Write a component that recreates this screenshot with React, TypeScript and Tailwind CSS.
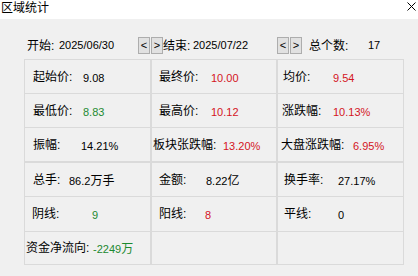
import React from 'react';

type Cell = {
  label?: string;
  value?: string;
  unit?: string;
  color?: string;
  pad?: string;
  lw?: string;
};

const RED = 'text-[#d4141e]';
const GREEN = 'text-[#1c8a30]';

const block1: Cell[][] = [
  [
    { label: '起始价:', value: '9.08', pad: 'pl-[8px]', lw: 'w-[50px]' },
    { label: '最终价:', value: '10.00', color: RED, pad: 'pl-[7px]', lw: 'w-[52px]' },
    { label: '均价:', value: '9.54', color: RED, pad: 'pl-[5px]', lw: 'w-[50px]' },
  ],
  [
    { label: '最低价:', value: '8.83', color: GREEN, pad: 'pl-[8px]', lw: 'w-[50px]' },
    { label: '最高价:', value: '10.12', color: RED, pad: 'pl-[7px]', lw: 'w-[52px]' },
    { label: '涨跌幅:', value: '10.13%', color: RED, pad: 'pl-[4px]', lw: 'w-[51px]' },
  ],
  [
    { label: '振幅:', value: '14.21%', pad: 'pl-[8px]', lw: 'w-[48px]' },
    { label: '板块张跌幅:', value: '13.20%', color: RED, pad: 'pl-[1px]', lw: 'w-[70px]' },
    { label: '大盘涨跌幅:', value: '6.95%', color: RED, pad: 'pl-[3px]', lw: 'w-[72px]' },
  ],
];

const block2: Cell[][] = [
  [
    { label: '总手:', value: '86.2', unit: '万手', pad: 'pl-[8px]', lw: 'w-[36px]' },
    { label: '金额:', value: '8.22', unit: '亿', pad: 'pl-[7px]', lw: 'w-[47px]' },
    { label: '换手率:', value: '27.17%', pad: 'pl-[6px]', lw: 'w-[54px]' },
  ],
  [
    { label: '阴线:', value: '9', color: GREEN, pad: 'pl-[7px]', lw: 'w-[60px]' },
    { label: '阳线:', value: '8', color: RED, pad: 'pl-[7px]', lw: 'w-[46px]' },
    { label: '平线:', value: '0', pad: 'pl-[6px]', lw: 'w-[54px]' },
  ],
  [
    { label: '资金净流向:', value: '-2249', unit: '万', color: GREEN, pad: 'pl-[1px]', lw: 'w-[67px]' },
    {},
    {},
  ],
];

const StatCell: React.FC<{ cell: Cell; last: boolean }> = ({ cell, last }) => (
  <div
    className={`flex items-center ${cell.pad ?? ''} ${
      last ? '' : 'border-r-2 border-[#dadada]'
    }`}
  >
    {cell.label && (
      <span className={`${cell.lw} shrink-0 text-[12px] whitespace-nowrap`}>
        {cell.label}
      </span>
    )}
    {cell.value && (
      <span className={`whitespace-nowrap ${cell.color ?? 'text-black'}`}>
        <span className="text-[11px]">{cell.value}</span>
        {cell.unit && <span className="text-[12px]">{cell.unit}</span>}
      </span>
    )}
  </div>
);

const StatRow: React.FC<{ row: Cell[]; h: string; border: string }> = ({
  row,
  h,
  border,
}) => (
  <div className={`grid grid-cols-[127px_126px_125px] ${h} ${border} border-[#dadada]`}>
    {row.map((c, i) => (
      <StatCell key={i} cell={c} last={i === 2} />
    ))}
  </div>
);

const ArrowBtn: React.FC<{ ch: string; className?: string }> = ({ ch, className }) => (
  <div
    className={`w-[12px] h-[17px] flex items-center justify-center bg-[#e1e1e1] border border-[#adadad] text-[11px] leading-none ${className ?? ''}`}
  >
    {ch}
  </div>
);

export default function App() {
  return (
    <div
      className="w-[418px] h-[276px] bg-[#f0f0f0] text-black overflow-hidden"
      style={{ fontFamily: '"Liberation Sans", "Noto Sans CJK SC", sans-serif' }}
    >
      <div className="h-[19px] bg-white flex items-start justify-between pl-[1px] pr-[2px]">
        <span className="text-[12px] leading-[16px]">区域统计</span>
        <svg width="9" height="9" viewBox="0 0 9 9" className="mt-[2px] mr-[0px]">
          <path d="M0.5 0.5 L8.5 8.5 M8.5 0.5 L0.5 8.5" stroke="#000" strokeWidth="1" />
        </svg>
      </div>

      <div className="flex items-center h-[17px] mt-[18px] pl-[27px]">
        <span className="w-[32px] text-[12px]">开始:</span>
        <span className="w-[79px] text-[11px]">2025/06/30</span>
        <ArrowBtn ch="<" />
        <ArrowBtn ch=">" className="ml-[1px]" />
        <span className="w-[30px] text-[12px]">结束:</span>
        <span className="w-[84px] text-[11px]">2025/07/22</span>
        <ArrowBtn ch="<" />
        <ArrowBtn ch=">" className="ml-[1px]" />
        <span className="w-[59px] ml-[7px] text-[12px]">总个数:</span>
        <span className="text-[11px]">17</span>
      </div>

      <div className="ml-[24px] mt-[5px] w-[380px] border border-[#dadada]">
        <StatRow row={block1[0]} h="h-[34px]" border="border-b" />
        <StatRow row={block1[1]} h="h-[34px]" border="border-b" />
        <StatRow row={block1[2]} h="h-[35px]" border="border-b-2" />
        <StatRow row={block2[0]} h="h-[34px]" border="border-b" />
        <StatRow row={block2[1]} h="h-[35px]" border="border-b" />
        <StatRow row={block2[2]} h="h-[32px]" border="" />
      </div>
    </div>
  );
}
